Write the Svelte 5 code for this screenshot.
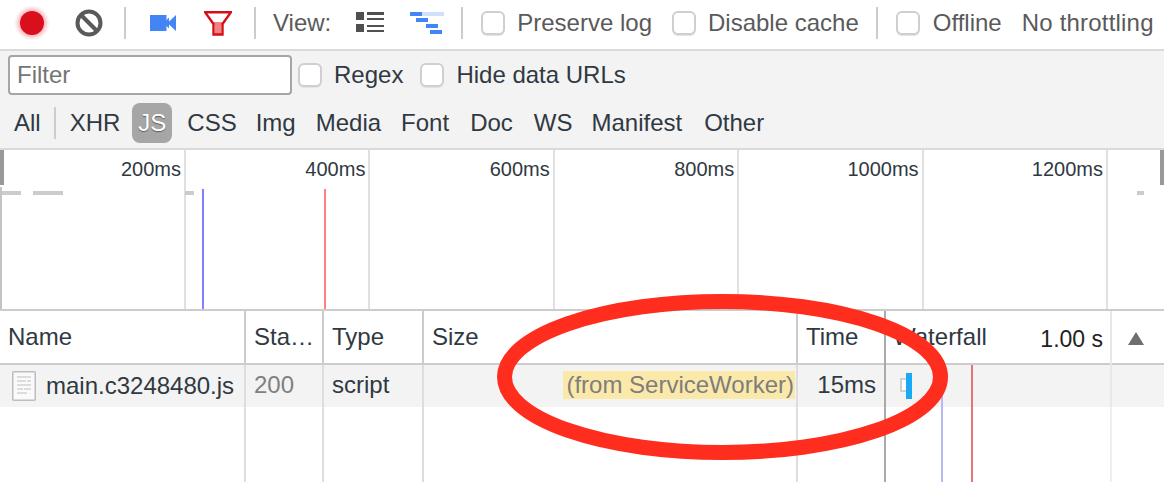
<script>
  const types = [
    { t: 'XHR', gap: 20 }, { t: 'JS', gap: 15 }, { t: 'CSS', gap: 19 }, { t: 'Img', gap: 20 },
    { t: 'Media', gap: 20 }, { t: 'Font', gap: 21 }, { t: 'Doc', gap: 21 }, { t: 'WS', gap: 19 },
    { t: 'Manifest', gap: 22 }, { t: 'Other', gap: 0 }
  ];
  const ticks = ['200ms', '400ms', '600ms', '800ms', '1000ms', '1200ms'];
</script>

<div class="page">
  <header class="toolbar">
    <svg class="ico rec" width="38" height="38" viewBox="0 0 38 38"><defs><radialGradient id="glow"><stop offset=".6" stop-color="#e8505a" stop-opacity=".55"/><stop offset="1" stop-color="#f4a0a6" stop-opacity="0"/></radialGradient></defs><circle cx="19" cy="19" r="18" fill="url(#glow)"/><circle cx="19" cy="19" r="12" fill="#d9101b"/></svg>
    <svg class="ico clear" width="28" height="28" viewBox="0 0 28 28"><circle cx="14" cy="14" r="11.5" fill="none" stroke="#5a5a5a" stroke-width="4"/><path d="M6 6l16 16" stroke="#5a5a5a" stroke-width="4"/></svg>
    <span class="sep s1"></span>
    <svg class="ico cam" width="26" height="16" viewBox="0 0 26 16"><path d="M0 0h16.5v16H0zM17.5 8L26 0v16z" fill="#4285f4"/><path d="M16 5.5l3-3v11l-3-3z" fill="#4285f4"/></svg>
    <svg class="ico fun" width="28" height="25" viewBox="0 0 28 25"><path d="M9 11h10l-2 4v9h-6v-9z" fill="#f08286"/><path d="M1 1.2h26L18.5 13v10.5h-9V13z" fill="none" stroke="#d50f16" stroke-width="2.4"/></svg>
    <span class="sep s2"></span>
    <span class="lbl view">View:</span>
    <svg class="ico lst" width="28" height="21" viewBox="0 0 28 21"><path d="M0 0h8v8H0zM0 12h8v8H0zM11 0h17v3H11zM11 6h17v2H11zM11 13h17v2H11zM11 18h17v2H11z" fill="#505050"/></svg>
    <svg class="ico wf" width="34" height="22" viewBox="0 0 34 22"><path d="M12 0h22v4H12z" fill="#d0e0fa"/><path d="M0 0h12v4H0zM6 6h12v4H6zM16 12h12v4H16zM20 18h12v4H20z" fill="#4285f4"/></svg>
    <span class="sep s3"></span>
    <span class="cb c1"></span><span class="lbl t1">Preserve log</span>
    <span class="cb c2"></span><span class="lbl t2">Disable cache</span>
    <span class="sep s4"></span>
    <span class="cb c3"></span><span class="lbl t3">Offline</span>
    <span class="lbl t4">No throttling</span>
  </header>

  <section class="filters">
    <div class="row-filter">
      <div class="input">Filter</div>
      <span class="cb"></span><span class="dark regex">Regex</span>
      <span class="cb c4"></span><span class="dark">Hide data URLs</span>
    </div>
    <div class="row-types">
      <span class="dark">All</span>
      <span class="tsep"></span>
      {#each types as item}
        <span class="dark type" class:on={item.t === 'JS'} style="margin-right:{item.gap}px">{item.t}</span>
      {/each}
    </div>
  </section>

  <section class="overview">
    <div class="ticks">
      {#each ticks as t}
        <div class="tick">{t}</div>
      {/each}
    </div>
    <i class="mark" style="left:0;top:0;width:4px;height:35px;background:#999"></i>
    <i class="mark" style="left:1160px;top:0;width:4px;height:35px;background:#999"></i>
    <i class="mark" style="left:0;top:37px;width:2px;height:122px;background:#c4c4c4"></i>
    <i class="mark" style="left:2px;top:41px;width:19px;height:4px;background:#ccc"></i>
    <i class="mark" style="left:33px;top:41px;width:30px;height:4px;background:#ccc"></i>
    <i class="mark" style="left:185px;top:41px;width:9px;height:4px;background:#ccc"></i>
    <i class="mark" style="left:1137px;top:41px;width:7px;height:4px;background:#ccc"></i>
    <i class="mark" style="left:202px;top:39px;width:2px;height:120px;background:#8080ff"></i>
    <i class="mark" style="left:324px;top:39px;width:2px;height:120px;background:#ff8080"></i>
  </section>

  <section class="net">
    <div class="grid head">
      <div class="cell first">Name</div>
      <div class="cell">Sta…</div>
      <div class="cell">Type</div>
      <div class="cell">Size</div>
      <div class="cell">Time</div>
      <div class="cell wfh"><span>Waterfall</span><span class="scale">1.00 s</span></div>
      <div class="cell arrow"><svg width="16" height="13" viewBox="0 0 16 13"><path d="M8 0l8 13H0z" fill="#6e6e6e"/></svg></div>
    </div>
    <div class="grid data">
      <div class="cell namec">
        <svg width="24" height="30" viewBox="0 0 24 30"><rect x=".75" y=".75" width="22.5" height="28.5" rx="1" fill="#fafafa" stroke="#bdbdbd" stroke-width="1.5"/><path d="M5 6h14M5 10h9M15 10h4M5 14h14M5 18h6M12 18h7M5 22h10" stroke="#dcdcdc" stroke-width="2"/></svg>
        <span>main.c3248480.js</span>
      </div>
      <div class="cell muted">200</div>
      <div class="cell">script</div>
      <div class="cell sizec"><mark>(from ServiceWorker)</mark></div>
      <div class="cell timec">15ms</div>
      <div class="cell wfc">
        <i class="bar-q"></i><i class="bar-b"></i>
      </div>
      <div class="cell"></div>
    </div>
    <div class="grid filler">
      <div class="cell"></div><div class="cell"></div><div class="cell"></div><div class="cell"></div><div class="cell"></div><div class="cell"></div><div class="cell"></div>
    </div>
    <i class="mark" style="left:941px;top:54px;width:2px;height:117px;background:#b8b8f4"></i>
    <i class="mark" style="left:971px;top:54px;width:2px;height:117px;background:#e5737c"></i>
    <i class="mark" style="left:884px;top:0;width:2px;height:171px;background:#a9a9a9"></i>
  </section>

  <svg class="ring" width="1164" height="482" viewBox="0 0 1164 482"><ellipse cx="722.5" cy="377" rx="218" ry="75.5" fill="none" stroke="#ff2d1e" stroke-width="15"/></svg>
</div>

<style>
  :global(body) { margin: 0; background: #fff; }
  .page {
    position: relative;
    width: 1164px;
    height: 482px;
    overflow: hidden;
    display: flex;
    flex-direction: column;
    font-family: "Liberation Sans", Arial, sans-serif;
    font-size: 24px;
    color: #303942;
  }
  .toolbar {
    box-sizing: border-box;
    height: 51px;
    flex: none;
    display: flex;
    align-items: center;
    padding: 0 0 4px 13px;
    border-bottom: 2px solid #dadada;
    color: #5a5a5a;
  }
  .ico, .cb, .sep { flex: none; }
  .sep { width: 2px; height: 32px; background: #ccc; }
  .clear { margin-left: 24px; }
  .s1 { margin-left: 21px; }
  .cam { margin-left: 24px; }
  .fun { margin-left: 28px; margin-top: 2px; }
  .s2 { margin-left: 22px; }
  .view { margin-left: 17px; }
  .lst { margin-left: 25px; }
  .wf { margin-left: 26px; }
  .s3 { margin-left: 17px; }
  .cb {
    box-sizing: border-box;
    width: 24px;
    height: 24px;
    border: 2px solid #cfcfcf;
    border-radius: 6px;
    background: #fff;
    box-shadow: 0 1px 0 #e4e4e4;
  }
  .c1 { margin-left: 18px; }
  .t1 { margin-left: 12px; }
  .c2 { margin-left: 20px; }
  .t2 { margin-left: 12px; }
  .s4 { margin-left: 17px; }
  .c3 { margin-left: 18px; }
  .t3 { margin-left: 13px; }
  .t4 { margin-left: 20px; letter-spacing: .2px; }
  .lbl { white-space: nowrap; line-height: 28px; }

  .filters {
    box-sizing: border-box;
    height: 99px;
    flex: none;
    background: #f3f3f3;
    border-bottom: 2px solid #dadada;
  }
  .row-filter {
    height: 48px;
    display: flex;
    align-items: center;
    padding-left: 8px;
  }
  .input {
    box-sizing: border-box;
    width: 284px;
    height: 40px;
    margin-right: 6px;
    padding-left: 7px;
    line-height: 36px;
    background: #fff;
    border: 2px solid #a5a5a5;
    border-radius: 4px;
    color: #757575;
  }
  .dark { white-space: nowrap; }
  .regex { margin-left: 12px; margin-right: 17px; }
  .c4 { margin-right: 12px; }
  .row-types {
    height: 48px;
    display: flex;
    align-items: center;
    padding-left: 14px;
  }
  .tsep { width: 2px; height: 32px; margin: 0 14px 0 13px; background: #ccc; flex: none; }
  .type.on {
    box-sizing: border-box;
    width: 40px;
    height: 40px;
    margin-left: -8px;
    line-height: 40px;
    text-align: center;
    border-radius: 8px;
    background: #a6a6a6;
    color: #fff;
    text-shadow: 0 1px 1px rgba(0,0,0,.45);
  }

  .overview {
    position: relative;
    box-sizing: border-box;
    height: 161px;
    flex: none;
    border-bottom: 2px solid #ccc;
    background: #fff;
  }
  .ticks { display: flex; height: 100%; }
  .tick {
    box-sizing: border-box;
    flex: none;
    width: 184.4px;
    padding: 8px 3px 0 0;
    text-align: right;
    font-size: 20px;
    line-height: 22px;
    border-right: 2px solid #e0e0e0;
  }
  .tick:first-child { width: 186px; }
  .mark { position: absolute; display: block; }

  .net { position: relative; flex: 1; display: flex; flex-direction: column; min-height: 0; }
  .grid {
    display: grid;
    grid-template-columns: 246px 78px 100px 374px 88px 226px 52px;
    flex: none;
  }
  .cell {
    box-sizing: border-box;
    padding-left: 8px;
    border-right: 2px solid #ddd;
    white-space: nowrap;
    min-width: 0;
  }
  .grid .cell:last-child { border-right: none; }
  .head { height: 54px; border-bottom: 2px solid #ccc; box-sizing: border-box; }
  .head .cell { line-height: 52px; border-right-color: #ccc; }
  .head .wfh { display: flex; justify-content: space-between; padding-right: 7px; padding-left: 7px; border-right-color: #e8e8e8; }
  .scale { color: #222; font-size: 23px; margin-top: 2px; }
  .head .arrow { display: flex; align-items: center; padding-left: 16px; }
  .data { height: 42px; background: #f3f3f3; }
  .data .cell { line-height: 40px; }
  .namec { display: flex; align-items: center; gap: 10px; padding-left: 12px; }
  .muted { color: #808080; }
  .sizec { padding-right: 0; display: flex; justify-content: flex-end; align-items: center; }
  mark { background: #fbe9a9; color: #7e7e7e; height: 28px; line-height: 28px; padding: 0 1px 0 3px; margin: -2px 1px 0 0; font-size: 24px; }
  .timec { text-align: right; padding-right: 8px; }
  .wfc { position: relative; }
  .data .wfc { border-right-color: #e8e8e8; }
  .bar-q { position: absolute; left: 14px; top: 13px; width: 11px; height: 14px; box-sizing: border-box; border: 2px solid #d0d0d0; background: #fff; }
  .bar-b { position: absolute; left: 20px; top: 8px; width: 6px; height: 26px; background: #1aa9f5; }
  .filler { flex: 1; }
  .filler .cell:nth-child(6) { border-right-color: #eee; }
  .ring { position: absolute; left: 0; top: 0; pointer-events: none; }
</style>
